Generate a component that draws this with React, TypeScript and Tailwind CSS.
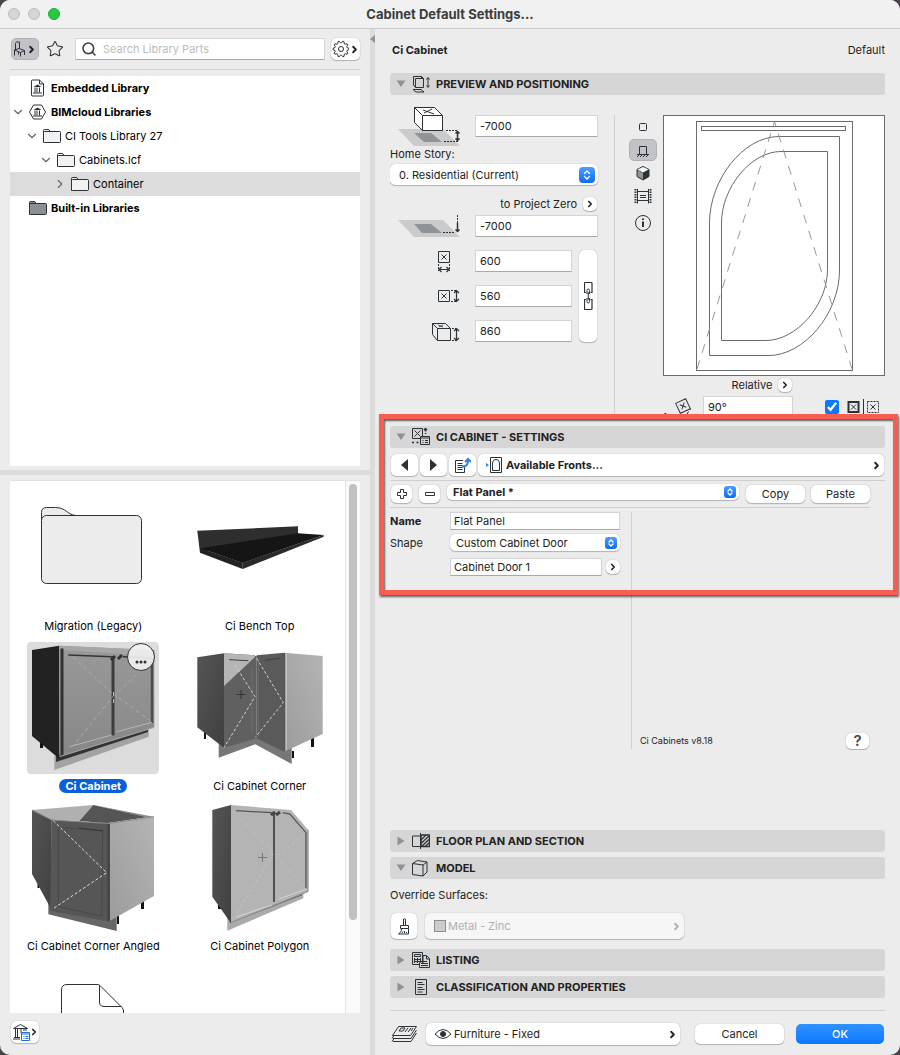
import type { ReactNode } from "react";
import { ChevronDown, ChevronRight, Search, Star } from "lucide-react";

const ink = "#2b3238";

const gearPoints = Array.from({ length: 40 }, (_, i) => {
    const angle = ((i - 0.5) / 40) * Math.PI * 2;
    const radius = i % 4 < 2 ? 8 : 6.2;
    return `${(9 + Math.cos(angle) * radius).toFixed(2)},${(9 + Math.sin(angle) * radius).toFixed(2)}`;
}).join(" ");

type IconProps = { w: number; h: number; children: ReactNode; className?: string };

const Icon = ({ w, h, children, className = "" }: IconProps) => (
    <svg
        width={w}
        height={h}
        viewBox={`0 0 ${w} ${h}`}
        fill="none"
        stroke={ink}
        strokeWidth="1"
        className={`shrink-0 ${className}`}
        aria-hidden="true"
    >
        {children}
    </svg>
);

/* Small tree icons */
const FolderIcon = ({ dark = false }: { dark?: boolean }) => (
    <Icon w={18} h={16}>
        <path d="M.5 14.5V2.5q0-1 1-1H5q1 0 2 1.5l.5.5h9q1 0 1 1v9q0 1-1 1H1.5q-1 0-1-1z" fill={dark ? "#8c9094" : "#f2f2f2"} />
        <path d="M.5 4.5q0-1 1-1h6" />
    </Icon>
);

const Temple = () => (
    <>
        <path d="M-4-2.5 0-5l4 2.5z" fill={ink} stroke="none" />
        <path d="M-2.5-2v5M-.5-2v5M2-2v5M-4.5 3.5h9" />
    </>
);

const EmbeddedIcon = () => (
    <Icon w={18} h={18}>
        <path d="M2.500 2q0-1 1-1h7l4 4v11q0 1-1 1h-10q-1 0-1-1zM10.500 1v4h4" fill="#fff" />
        <g transform="translate(8.500 10.500)"><Temple /></g>
    </Icon>
);

const CloudIcon = () => (
    <Icon w={18} h={18}>
        <path d="M4.500 2h8l4 7-4 7h-8l-4-7z" fill="#fff" />
        <g transform="translate(8.500 9.500)"><Temple /></g>
    </Icon>
);

/* Section bar icons */
const PreviewIcon = () => (
    <Icon w={18} h={18}>
        <path d="M3.500 3.500h8v9h-8zM1.500 1.500h8l2 2M1.500 1.500v8.500l2 2.500M9.500 1.500v2M1 14.500h8l3 2.500H4z" />
        <path d="M16 3v9M14.500 4.500 16 2.500l1.500 2M14.500 10.500l1.500 2 1.500-2" />
    </Icon>
);

const SettingsIcon = () => (
    <Icon w={18} h={18}>
        <path d="M.5.5h10v10H.5zM2.500 2.500l6 6M8.500 2.500l-6 6" />
        <path d="M13.500.5v3M15 2l-1.500-1.500L12 2M13.500 5v1M0 14.500h2M4.500 14.500h2" strokeWidth="1.500" />
        <path d="M8.500 8.500h9v8h-9zM8.500 10h9" fill="#d6d6d6" />
        <path d="M10.500 12.500h1M13 12.500h3M10.500 14.500h1M13 14.500h3" />
    </Icon>
);

const FloorIcon = () => (
    <Icon w={18} h={18}>
        <path d="M8.500 4H.5v10.500h8M8.500 1v16" />
        <path d="M9 3h8.500v11.500H9z" strokeWidth="1.500" />
        <path d="m9 8 5-5M9 11.500 17 4M10 14l7-6.500M13.500 14l3.500-3" strokeWidth="1.300" />
    </Icon>
);

const ModelIcon = () => (
    <Icon w={18} h={18}>
        <path d="M.5 4.500 5.500 1.500l9.500 1.500v10l-4 4L.5 15.500zM.5 4.500l10.500 1.500v11M11 6l4-3" />
    </Icon>
);

const ListingIcon = () => (
    <Icon w={18} h={18}>
        <path d="M.5 1.500h10v12H.5zM2.500 3.500h6v2h-6zM2 8.500h7M2 10.500h7M2.500 7v5M5.500 7v5M8.500 7v5" />
        <path d="M7.500 11.500v5h10v-9l-3-3h-3.500v8" fill="#d6d6d6" />
        <path d="M14.500 5v3h3M9 10.500h6M9 12.500h7M9 14.500h7" />
    </Icon>
);

const ClassIcon = () => (
    <Icon w={18} h={18}>
        <path d="M3.500 1.500h11v15h-11zM5.500 4.500h5M5.500 6.500h7M5.500 9.500h5M5.500 11.500h7M5.500 14h5" />
    </Icon>
);

const BoxedCross = ({ x, y }: { x: number; y: number }) => (
    <path d={`M${x} ${y}h11v11h-11zM${x + 3} ${y + 3}l5 5M${x + 8} ${y + 3}l-5 5`} />
);

const PopUpArrows = ({ small = false }: { small?: boolean }) => (
    <span
        className={`pointer-events-none absolute top-1/2 flex -translate-y-1/2 items-center justify-center bg-linear-to-b from-[#4a9dff] to-[#0a6cf5] ${small ? "right-[3px] size-3 rounded-[3px]" : "right-[3px] size-4 rounded"}`}
    >
        <svg width="8" height="10" viewBox="0 0 8 10" fill="none" stroke="#fff" strokeWidth="1.300" strokeLinecap="round">
            {small ? <path d="m2 4 2-2 2 2M2 6l2 2 2-2" /> : <path d="M1.500 3.500 4 1l2.500 2.500M1.500 6.500 4 9l2.500-2.500" />}
        </svg>
    </span>
);

const card = "rounded-[5px] bg-white shadow-[0_0_1px_rgba(0,0,0,0.35),0_1px_1px_rgba(0,0,0,0.22)]";
const field = "min-w-0 border border-[#d4d4d4] border-b-[#a9a9a9] bg-white outline-none";

const Arrow = ({ className = "size-[11px]" }: { className?: string }) => (
    <ChevronRight className={`shrink-0 ${className}`} strokeWidth={4} />
);

const Bar = ({ title, icon, open = false }: { title: string; icon: ReactNode; open?: boolean }) => (
    <button className="flex h-[22px] w-full shrink-0 items-center gap-1.5 rounded-[3px] bg-[#d6d6d6] pl-1.5 text-left text-[11px] font-bold" aria-expanded={open}>
        <svg width="10" height="10" viewBox="0 0 10 10" fill="#8e9296" aria-hidden="true">
            {open ? <path d="M.5 1.500h9L5 8z" /> : <path d="M1.500.5v9L8.500 5z" />}
        </svg>
        {icon}
        {title}
    </button>
);

const tree = [
    { label: "Embedded Library", depth: 0, icon: <EmbeddedIcon />, bold: true, arrow: "" },
    { label: "BIMcloud Libraries", depth: 0, icon: <CloudIcon />, bold: true, arrow: "down" },
    { label: "CI Tools Library 27", depth: 1, icon: <FolderIcon />, bold: false, arrow: "down" },
    { label: "Cabinets.lcf", depth: 2, icon: <FolderIcon />, bold: false, arrow: "down" },
    { label: "Container", depth: 3, icon: <FolderIcon />, bold: false, arrow: "right" },
    { label: "Built-in Libraries", depth: 0, icon: <FolderIcon dark />, bold: true, arrow: "" },
];

/* Library part thumbnails */
const Thumb = ({ children }: { children: ReactNode }) => (
    <svg width="132" height="132" viewBox="0 0 132 132" fill="none" aria-hidden="true">
        <defs>
            <linearGradient id="door" x1="0" y1="0" x2="0" y2="1">
                <stop offset="0" stopColor="#999" />
                <stop offset="1" stopColor="#878787" />
            </linearGradient>
            <linearGradient id="lightSide" x1="1" y1="0" x2="0" y2="1">
                <stop offset="0" stopColor="#b4b4b4" />
                <stop offset="1" stopColor="#9c9c9c" />
            </linearGradient>
            <linearGradient id="darkSide" x1="0" y1="0" x2="1" y2="1">
                <stop offset="0" stopColor="#555" />
                <stop offset="1" stopColor="#404040" />
            </linearGradient>
        </defs>
        {children}
    </svg>
);

const LegacyThumb = () => (
    <Thumb>
        <g fill="#ececec" stroke={ink}>
            <path d="M14.500 38V30.500q0-5 5-5h9c11 0 12 8 21 8" />
            <rect x="14.500" y="33.500" width="100" height="68" rx="5" />
        </g>
    </Thumb>
);

const BenchThumb = () => (
    <Thumb>
        <path d="M3.300 48.700 104 44.300v8L6 71z" fill="#2e2e2e" />
        <path d="M6 66.300 104 51.300l25.700 1.700-81 28z" fill="#151515" />
        <path d="M6 66.300v4.400L48.700 87v-6.300z" fill="#222" />
        <path d="M48.700 80.700V87l81-32.300V53z" fill="#2a2a2a" />
    </Thumb>
);

const CabinetThumb = () => (
    <Thumb>
        <path d="M13 97h3v9h-3z" fill="#111" />
        <path d="m27.300 114 94.400-30v10.700L27.300 128z" fill="#a3a3a3" />
        <path d="m29 113 92-27v4L29 120z" fill="#333" />
        <path d="m5 8 27.300-4.300v113L5 94z" fill="#222" />
        <path d="m32.300 3.700 95 4.300v77.300l-95 29.400z" fill="url(#door)" />
        <path d="m32.300 3.700 95 4.300v6l-95-6z" fill="#a6a6a6" />
        <path d="M33.500 6.500h3v107l-3 1z" fill="#333" />
        <path d="m41.300 13 43.400 1.700M96 14.700l29 1.600" stroke="#333" strokeWidth="1.500" />
        <path d="M86 14v79.500" stroke="#3c3c3c" strokeWidth="3" />
        <path d="M125 16v65" stroke="#4c4c4c" strokeWidth="2.500" />
        <path d="M42.300 104.700 84.700 93m5-3.300L125 80.300" stroke="#b5b5b5" />
        <path d="m33 114.500 94-29" stroke="#a8a8a8" />
        <path d="M46 15l41 38-40 50M125 18 88 53l37 27" stroke="#b2b2b2" strokeDasharray="4 3" strokeWidth=".8" />
        <path d="m84 18 4-4m3 3 4-4" stroke="#333" strokeWidth="3" />
        <path d="M86.500 50v4m0 3v4" stroke="#bbb" />
    </Thumb>
);

const CornerThumb = () => (
    <Thumb>
        <path d="M10 89h2v8h-2zM117 95h3v10h-3zM98 109h2v7h-2z" fill="#111" />
        <path d="M24.700 100v15.700l36.600-13.400 36.400 19.700v-16L61 92z" fill="#777" />
        <path d="m3.300 15.300 26.700-4v94.400L3.300 85.300z" fill="url(#darkSide)" />
        <path d="m30 11.300 32.700 2v83L30 105.700z" fill="#606060" />
        <path d="m30 11.300 31 2v1.700L30 44z" fill="#b5b5b5" />
        <path d="M62.700 13.300 90 10.700v99L62.700 96.300z" fill="#5a5a5a" />
        <path d="m90 10.700 38.700 3.300v78L90 109.700z" fill="url(#lightSide)" />
        <path d="M90.500 11v98.500" stroke="#555" />
        <path d="M92.500 12v96" stroke="#ccc" strokeWidth=".7" />
        <path d="m35.300 17.700 19 1m16.700-.4 15-2" stroke="#3f3f3f" />
        <path d="M58 24v68M64.500 18v76" stroke="#727272" strokeWidth=".7" />
        <path d="m41 23 20 31.700-31 51M62.700 16.300l26.600 44.400-28 34.600" stroke="#d0d0d0" strokeDasharray="3 2" />
        <path d="M47 48v9M42.500 52.500h9" stroke="#333" />
    </Thumb>
);

const AngledThumb = () => (
    <Thumb>
        <path d="M10.500 80h2v6h-2zM114 99h3v8h-3zM90 114h2v8h-2z" fill="#111" />
        <path d="M21.300 100v12.300L89.700 129v-16z" fill="#666" />
        <path d="m5 8 61.300-5-14 16-27.600-1z" fill="#b0b0b0" />
        <path d="m66.300 3 55 12-41.600 6.300L52.300 19z" fill="#555" />
        <path d="m66.300 3 60 11.700-5 1z" fill="#8b8b8b" />
        <path d="m5 8 19.700 10v90L5 72z" fill="url(#darkSide)" />
        <path d="m24.700 18 58.300 3.300v98.400l-60-11z" fill="#565656" />
        <path d="m31.300 25.300 44.400 3.400-1 85.300-43.400-9.300z" stroke="#494949" />
        <path d="m52 26 24 3" stroke="#333" />
        <path d="m83 21.300 44-6.600V94l-44 24.700z" fill="url(#lightSide)" />
        <path d="M81.500 22v97" stroke="#414141" strokeWidth="2" />
        <path d="m5 8 20 10 57 3.500 45-6.800" stroke="#888" />
        <path d="m26.300 18.700 53.400 52-54 36.300" stroke="#ddd" strokeDasharray="3 2" />
    </Thumb>
);

const PolygonThumb = () => (
    <Thumb>
        <path d="M24 101h3v6h-3z" fill="#111" />
        <path d="m33.300 114 76-24v6.300l-76 32.400z" fill="#aaa" />
        <path d="m36 120 72-28" stroke="#444" strokeWidth="2" />
        <path d="M18.300 8 37 3v118.300L18.300 94.700z" fill="url(#darkSide)" />
        <path d="m37 3 60 5 17.300 20v61.700L37 121z" fill="#b4b4b4" />
        <path d="m42 8.700 35.700 2m11 0L96 12l16 18.700v55.600" stroke="#555" strokeWidth="1.300" />
        <path d="M114 28v61.500L37 120.500" stroke="#8a8a8a" />
        <path d="M80 12v88" stroke="#505050" strokeWidth="2" />
        <path d="m42 115 36-12m7-6 27-10" stroke="#d4d4d4" />
        <path d="m42.700 13 37 38L42 113M110 33 82 54.700l28 30" stroke="#c8c8c8" strokeDasharray="3 3" strokeWidth=".7" />
        <path d="m77 13 4-3m1 3 4-3" stroke="#444" strokeWidth="3" />
        <path d="M68.500 51v9M64 55.500h9" stroke="#777" />
    </Thumb>
);

const FileThumb = () => (
    <Thumb>
        <path d="M34.500 132V28q0-5.500 5.500-5.500h30q2 0 3 1l22 22q1.500 1.500 1.500 3.500v83M72.500 23v17q0 4.500 4.500 4.500h17.500" stroke={ink} />
    </Thumb>
);

const parts = [
    { label: "Migration (Legacy)", thumb: <LegacyThumb /> },
    { label: "Ci Bench Top", thumb: <BenchThumb /> },
    { label: "Ci Cabinet", thumb: <CabinetThumb />, selected: true },
    { label: "Ci Cabinet Corner", thumb: <CornerThumb /> },
    { label: "Ci Cabinet Corner Angled", thumb: <AngledThumb /> },
    { label: "Ci Cabinet Polygon", thumb: <PolygonThumb /> },
    { label: "", thumb: <FileThumb /> },
];

const LibraryPanel = () => (
    <aside className="flex w-[370px] shrink-0 flex-col px-2.5 pb-3">
        <div className="flex h-10 shrink-0 items-center pl-px">
            <button aria-label="Library view" className="flex h-[22px] w-7 items-center justify-center rounded-[5px] border border-[#b0b0b5] bg-[#c2c2c8]">
                <Icon w={13} h={16}>
                    <path d="M2.500 9V2.500q0-1 1-1.500L6.500 1v6M1.500 9l4.500-1.500 5.500 2-4 2zM1.500 9v5.500M7.500 11.500V15.500M11.500 9.500V14M5.500 11v2.500" />
                </Icon>
                <Arrow />
            </button>
            <button aria-label="Favorites" className="ml-[7px]">
                <Star className="size-[18px] text-[#2b3238]" strokeWidth={1.4} />
            </button>
            <label className="relative ml-[11px] flex-1">
                <Search className="absolute top-[3px] left-1.5 size-4 text-[#444]" strokeWidth={2.4} />
                <input
                    aria-label="Search Library Parts"
                    placeholder="Search Library Parts"
                    className={`${field} block h-[22px] w-full pl-[27px] placeholder:text-[#bcbcbc]`}
                />
            </label>
            <button aria-label="Options" className={`${card} ml-1.5 flex h-[22px] w-[29px] items-center justify-center`}>
                <Icon w={17} h={18}>
                    <polygon points={gearPoints} />
                    <circle cx="9" cy="9" r="2.500" />
                </Icon>
                <Arrow />
            </button>
        </div>
        <hr className="mb-1.5 border-[#cfcfcf]" />

        <ul className="h-[390px] shrink-0 bg-white text-black">
            {tree.map((row) => (
                <li key={row.label} className={row.label === "Container" ? "bg-[#dcdcdc]" : ""}>
                    <div className={`flex h-6 items-center ${["pl-[3px]", "pl-[17px]", "pl-[31px]", "pl-[45px]"][row.depth]}`}>
                        <span className="mr-1.5 w-2.5 text-[#666]">
                            {row.arrow === "down" && <ChevronDown className="-ml-0.5 size-3.5" strokeWidth={2} />}
                            {row.arrow === "right" && <ChevronRight className="-ml-0.5 size-3.5" strokeWidth={2} />}
                        </span>
                        {row.icon}
                        <span className={`ml-1 ${row.bold ? "font-bold" : ""}`}>{row.label}</span>
                    </div>
                </li>
            ))}
        </ul>
        <div className="-mx-2.5 mt-1 mb-[5px] h-[5px] shrink-0 bg-[#dcdcdc]"></div>

        <div className="flex min-h-0 flex-1 border-t border-[#e2e2e2] bg-white">
            <div className="grid flex-1 auto-rows-[160px] grid-cols-2 overflow-hidden pt-px pr-0.5 text-black">
                {parts.map((part, index) => (
                    <div key={index} className="flex flex-col items-center">
                        <div className={`relative rounded ${part.selected ? "bg-[#dcdcdc]" : ""}`}>
                            {part.thumb}
                            {part.selected && (
                                <button aria-label="More" className="absolute top-px right-1 flex size-7 items-end justify-center rounded-full border border-[#2b3238] bg-[#f2f2f2]/90 pb-1.5">
                                    <svg width="12" height="4" fill={ink}>
                                        <circle cx="2" cy="2" r="1.500" />
                                        <circle cx="6" cy="2" r="1.500" />
                                        <circle cx="10" cy="2" r="1.500" />
                                    </svg>
                                </button>
                            )}
                        </div>
                        <p className={`mt-[5px] rounded-full px-1.5 leading-[14px] ${part.selected ? "bg-[#0a60dc] font-bold text-white" : ""}`}>{part.label}</p>
                    </div>
                ))}
            </div>
            <div className="w-[15px] border-l border-[#e4e4e4] bg-[#fafafa] pt-[3px]">
                <div className="mx-auto h-[436px] w-2 rounded-full bg-[#c1c1c1]"></div>
            </div>
        </div>
        <button aria-label="Library manager" className={`${card} mt-2 ml-px flex h-[22px] w-7 shrink-0 items-center justify-center`}>
            <Icon w={19} h={19}>
                <path d="M1.500 5.500 8.500 1.500l7 4zM3.500 6v8M5.500 6v8M9 6v4M12 6v2M14 6v2M2 14.500h6M1 16h7" />
                <path d="M9.500 9.500h8v8h-8z" fill="#fff" stroke="#1d6fe0" />
                <path d="M9.500 11h8M11.500 13.500h1M13.500 13.500h3M11.500 15.500h1M13.500 15.500h3" stroke="#1d6fe0" />
            </Icon>
            <Arrow className="-ml-0.5 size-[10px]" />
        </button>
    </aside>
);

const sizes = [
    {
        label: "Width",
        value: "600",
        icon: (
            <Icon w={29} h={24}>
                <BoxedCross x={7.5} y={2.5} />
                <path d="M7.500 15v7M18.500 15v7" strokeDasharray="2 1" />
                <path d="M8 20.500h10M10.500 18 8 20.500l2.500 2.500M15.500 18l2.500 2.500-2.500 2.500" strokeWidth="1.200" />
            </Icon>
        ),
    },
    {
        label: "Depth",
        value: "560",
        icon: (
            <Icon w={29} h={24}>
                <BoxedCross x={7.5} y={6.5} />
                <path d="M20 6.500h5M20 17.500h5" strokeDasharray="2 1" />
                <path d="M25.500 7v10M23 9l2.500-2.500L28 9M23 15l2.500 2.500L28 15" strokeWidth="1.200" />
            </Icon>
        ),
    },
    {
        label: "Height",
        value: "860",
        icon: (
            <Icon w={29} h={24}>
                <path d="M1.500 4.500h13l5 5v12h-13l-5-6zM1.500 4.500l5 5h13M6.500 9.500v12" />
                <path d="m7 6 5 2M8 8l4-2" strokeWidth=".8" />
                <path d="M21 9.500h4M21 21.500h4" strokeDasharray="2 1" />
                <path d="M25.500 10v11M23 12l2.500-2.500L28 12M23 19l2.500 2.500L28 19" strokeWidth="1.200" />
            </Icon>
        ),
    },
];

const PositionForm = () => (
    <div className="w-52 shrink-0 pt-2.5">
        <div className="flex h-[42px] items-center justify-between pl-2">
            <Icon w={64} h={42}>
                <path d="M0 24h45l17 17H16z" fill="#cbcbcb" stroke="none" />
                <path d="M16 28h17l11 9H26z" fill="#8f9498" stroke="none" />
                <path d="M16.500 2.500h20l8 8v15h-20l-8-8z" fill="#fff" />
                <path d="M16.500 2.500l8 8h20M24.500 10.500v15M25 5l11 4M26 8l8-4" />
                <path d="M48 25.500h12M46 36.500h14" strokeDasharray="2 1" />
                <path d="M59.500 27v8M57.500 28.500l2-2 2 2M57.500 33.500l2 2 2-2" strokeWidth="1.500" />
            </Icon>
            <input aria-label="Elevation to home story" defaultValue="-7000" className={`${field} h-[22px] w-[123px] px-1`} />
        </div>
        <label htmlFor="story" className="block leading-[14px]">Home Story:</label>
        <div className="relative mt-[3px]">
            <select id="story" className={`${card} h-[21px] w-full appearance-none pl-[9px] outline-none`}>
                <option>0. Residential (Current)</option>
            </select>
            <PopUpArrows />
        </div>
        <div className="mt-3 flex h-3.5 items-center justify-end gap-1.5 pr-px">
            to Project Zero
            <button aria-label="Reference level" className={`${card} flex size-3.5 items-center justify-center`}><Arrow className="size-2.5" /></button>
        </div>
        <div className="mt-1 flex items-center justify-between pl-2">
            <Icon w={64} h={22}>
                <path d="M0 5h45l17 17H16z" fill="#cbcbcb" stroke="none" />
                <path d="M16 9h17l11 9H24z" fill="#8f9498" stroke="none" />
                <path d="M45 17.500h12M59.500 0v8" strokeDasharray="2 1" />
                <path d="M59.500 8v9M57.500 14.500l2 2 2-2" strokeWidth="1.500" />
            </Icon>
            <input aria-label="Elevation to project zero" defaultValue="-7000" className={`${field} h-[22px] w-[123px] px-1`} />
        </div>
        <div className="mt-[13px] flex justify-between">
            <div className="flex flex-col gap-[13px]">
                {sizes.map((size) => (
                    <label key={size.label} className="flex h-[22px] items-center gap-[15px] pl-[41px]">
                        {size.icon}
                        <input aria-label={size.label} defaultValue={size.value} className={`${field} h-[22px] w-[97px] px-1`} />
                    </label>
                ))}
            </div>
            <button aria-label="Keep proportions" className={`${card} mr-px flex w-[18px] items-center justify-center`}>
                <Icon w={9} h={30}>
                    <path d="M2 11.500H.5V2q0-.5.5-.5h6.500q.5 0 .5.5v9.500H6.500M2 18.500H.5V28q0 .5.5.5h6.500q.5 0 .5-.5v-9.500H6.500" strokeWidth="1.200" />
                    <path d="M3 13V9.500Q3 8 4.300 8T5.600 9.500V13M3 17v3.500Q3 22 4.300 22t1.300-1.500V17M4.300 11v8" />
                </Icon>
            </button>
        </div>
    </div>
);

const views = [
    { label: "2D symbol", icon: <Icon w={18} h={18}><rect x="5.500" y="5.500" width="7" height="7" rx="1" /></Icon> },
    { label: "Side view", selected: true, icon: <Icon w={18} h={18}><path d="M5.500 13V5.500h7V13M3 13.500h12M3 16l2-2M6 16l2-2M9 16l2-2M12 16l2-2" /></Icon> },
    {
        label: "3D view",
        icon: (
            <Icon w={18} h={18}>
                <path d="m9 2.500 6 3v7l-6 3.500-6-3.500v-7z" fill={ink} />
                <path d="m9 3 5.500 2.500L9 8.500 3.500 5.500z" fill="#fff" stroke="none" />
                <path d="m3.500 6 5.500 3v6.500l-5.500-3.200z" fill="#8f9498" stroke="none" />
            </Icon>
        ),
    },
    {
        label: "Preview picture",
        icon: (
            <Icon w={18} h={18}>
                <path d="M3.500 4.500h11v9h-11zM6 8.500h6M6 10.500h6" />
                <path d="M1.500 2v14.500M16.500 2v14.500" strokeWidth="2" strokeDasharray="1.500 1" />
                <path d="M3.500 2v14.500M14.500 2v14.500" />
            </Icon>
        ),
    },
    {
        label: "Info",
        icon: (
            <Icon w={18} h={18}>
                <circle cx="9" cy="9" r="7.500" />
                <path d="M9 7.500V13M9 4.500v1.500" strokeWidth="2" />
            </Icon>
        ),
    },
];

const PreviewPane = () => (
    <div className="mt-5 flex min-w-0 flex-1 border-l border-[#cfcfcf] pl-3.5">
        <div className="mt-px flex h-fit flex-col gap-px">
            {views.map((view) => (
                <button
                    key={view.label}
                    aria-label={view.label}
                    className={`flex h-[22px] w-7 items-center justify-center rounded-[5px] last:mt-1 ${view.selected ? "border border-[#b0b0b5] bg-[#c2c2c8]" : ""}`}
                >
                    {view.icon}
                </button>
            ))}
        </div>
        <div className="ml-1.5 flex min-w-0 flex-1 flex-col">
            <svg viewBox="0 0 222 261" className="w-full shrink-0 bg-white" fill="none" stroke="#6b6b6b">
                <rect x=".5" y=".5" width="221" height="260" />
                <rect x="33.500" y="6.500" width="156" height="249" />
                <rect x="38.500" y="11.500" width="144" height="4" />
                <path d="M46.500 108v132.500H106C140 240.500 176.500 200 176.500 155V21.500H116C80 21.500 46.500 65 46.500 108z" />
                <path d="M58.500 108v117.500H103c30 0 61.500-35 61.500-71V36.500H118c-30 0-59.500 36-59.500 71.500z" />
                <path d="M34 254 111.500 6.500 189 254" stroke="#999" strokeDasharray="9 8" />
            </svg>
            <div className="flex h-[18px] shrink-0 items-center justify-center gap-1.5 pr-6">
                Relative
                <button aria-label="Angle mode" className={`${card} flex size-3.5 items-center justify-center`}><Arrow className="size-2.5" /></button>
            </div>
            <div className="mt-0.5 flex items-center">
                <Icon w={28} h={22} className="mr-3">
                    <g transform="rotate(-25 20 10)"><BoxedCross x={14.5} y={4.5} /></g>
                    <path d="M24 18l4-6M7 19.500l19-1" strokeDasharray="3 2" />
                    <path d="m2 17 3 2.500H2z" fill={ink} />
                </Icon>
                <input aria-label="Rotation angle" defaultValue="90°" className={`${field} h-[22px] w-[90px] px-1`} />
                <input aria-label="Mirror" type="checkbox" defaultChecked className="ml-auto size-3.5 accent-[#0a78ff]" />
                <Icon w={36} h={18} className="ml-1.5 mr-1">
                    <path d="M3.500 4h10v10h-10z" strokeWidth="2" />
                    <path d="m6 6.500 5 5M11 6.500l-5 5M18.500 1v16" />
                    <path d="M22.500 3.500h11v11h-11z" strokeDasharray="2 1" />
                    <path d="m25.500 6.500 5 5M30.500 6.500l-5 5" />
                </Icon>
            </div>
        </div>
    </div>
);

const CabinetSettings = () => (
    <section className="relative flex-1">
        <Bar title="CI CABINET - SETTINGS" icon={<SettingsIcon />} open />
        <div className="mt-1.5 flex h-[22px] gap-0.5 px-px">
            <button aria-label="Previous page" className={`${card} flex w-[27px] items-center justify-center`}>
                <svg width="7" height="12" fill={ink}><path d="M7 0v12L0 6z" /></svg>
            </button>
            <button aria-label="Next page" className={`${card} flex w-[27px] items-center justify-center`}>
                <svg width="7" height="12" fill={ink}><path d="M0 0v12l7-6z" /></svg>
            </button>
            <button aria-label="Page list" className={`${card} flex w-[27px] items-center justify-center`}>
                <Icon w={17} h={17}>
                    <path d="M9 3.500H1.500v12h9V10M3.500 6.500h5M3.500 8.500h5M3.500 10.500h5M3.500 12.500h5" />
                    <path d="M8 9.500c4 0 6-1 6-7M11 5l3-3 3 3" stroke="#2f80f5" strokeWidth="2" />
                </Icon>
            </button>
            <button className={`${card} flex flex-1 items-center pr-0.5 pl-2 font-bold`}>
                <Icon w={16} h={17} className="mr-1">
                    <path d="M0 6v4l3-2z" fill="#2f80f5" stroke="none" />
                    <path d="M4.500.5h11v15h-11zM6.500 13.500V6q0-3.500 3.500-3.500T13.500 6v7.500z" />
                </Icon>
                Available Fronts...
                <Arrow className="ml-auto size-[11px]" />
            </button>
        </div>
        <hr className="mt-1 border-[#cfcfcf]" />
        <div className="mr-[15px] flex h-[27px] items-center border-b border-[#cfcfcf] pb-px">
            <button aria-label="Add" className={`${card} ml-px flex h-[18px] w-[21px] items-center justify-center`}>
                <Icon w={10} h={10}><path d="M3.500.5h3v3h3v3h-3v3h-3v-3h-3v-3h3z" /></Icon>
            </button>
            <button aria-label="Remove" className={`${card} ml-[7px] flex h-[18px] w-[21px] items-center justify-center`}>
                <Icon w={10} h={10}><path d="M.5 3.500h9v3h-9z" /></Icon>
            </button>
            <div className="relative mr-[7px] mb-1 ml-[7px] flex-1">
                <select aria-label="Front" className={`${card} block h-4 w-full appearance-none pl-1.5 font-bold outline-none`}>
                    <option>Flat Panel *</option>
                </select>
                <PopUpArrows small />
            </div>
            <button className={`${card} h-[18px] w-[59px]`}>Copy</button>
            <button className={`${card} ml-1.5 h-[18px] w-[59px]`}>Paste</button>
        </div>

        <div className="mt-1 flex h-[237px]">
            <div className="w-[242px] shrink-0 border-r border-[#cfcfcf] pr-[11px]">
                <div className="flex items-center">
                    <label htmlFor="front-name" className="w-[60px] font-bold">Name</label>
                    <input id="front-name" defaultValue="Flat Panel" className={`${field} h-[18px] flex-1 px-[3px]`} />
                </div>
                <div className="mt-1 flex items-center">
                    <label htmlFor="front-shape" className="w-[60px]">Shape</label>
                    <div className="relative flex-1">
                        <select id="front-shape" className={`${card} block h-[17px] w-full appearance-none pl-1.5 outline-none`}>
                            <option>Custom Cabinet Door</option>
                        </select>
                        <PopUpArrows small />
                    </div>
                </div>
                <div className="mt-[7px] flex items-center justify-end pl-[60px]">
                    <input aria-label="Door" defaultValue="Cabinet Door 1" className={`${field} h-[18px] flex-1 px-[3px]`} />
                    <button aria-label="Choose door" className={`${card} ml-1 flex size-3.5 items-center justify-center`}><Arrow className="size-2.5" /></button>
                </div>
            </div>
            <div className="flex flex-1 items-end justify-between pr-4 pl-2">
                <p className="text-[9px] leading-4">Ci Cabinets v8.18</p>
                <button aria-label="Help" className={`${card} h-4 w-[23px] text-[15px] leading-4 font-semibold text-[#444]`}>?</button>
            </div>
        </div>

        {/* Highlight frame */}
        <div className="pointer-events-none absolute -top-3 -right-[13px] -left-[11px] h-[181px] border-[5px] border-[#f95c50] shadow-[1px_2px_2px_rgba(0,0,0,0.6),inset_1px_2px_2px_rgba(0,0,0,0.6)]"></div>
    </section>
);

const SettingsPanel = () => (
    <main className="flex min-w-0 flex-1 flex-col px-[15px] pb-2.5">
        <div className="flex h-11 shrink-0 items-center justify-between pb-0.5 pl-0.5">
            <h2 className="font-bold">Ci Cabinet</h2>
            <span>Default</span>
        </div>
        <Bar title="PREVIEW AND POSITIONING" icon={<PreviewIcon />} open />
        <div className="mb-2.5 flex h-[321px] shrink-0 gap-4 overflow-hidden">
            <PositionForm />
            <PreviewPane />
        </div>
        <CabinetSettings />
        <div className="flex flex-col gap-[5px]">
            <Bar title="FLOOR PLAN AND SECTION" icon={<FloorIcon />} />
            <Bar title="MODEL" icon={<ModelIcon />} open />
        </div>
        <p className="mt-2 leading-4">Override Surfaces:</p>
        <div className="mt-2.5 mb-2.5 flex gap-2">
            <button aria-label="Override" className={`${card} ml-px flex h-[26px] w-[26px] items-center justify-center`}>
                <Icon w={13} h={17}>
                    <path d="M5.500 7V2q0-1.500 1-1.500t1 1.500v5M2.500 7.500h8v3h-8zM3.500 10.500c0 3-1 4-3 5.500h10V10.500M4 15l1-1.500M6.500 15v-2M8.500 15v-1" />
                </Icon>
            </button>
            <button disabled className={`${card} flex h-[26px] w-[259px] items-center bg-white/50 pr-0.5 pl-[9px] text-[#b0b0b0]`}>
                <span className="mr-0.5 size-3 border border-[#8c8c8c] bg-[#cdcdcd]"></span>
                Metal - Zinc
                <Arrow className="ml-auto size-[11px]" />
            </button>
        </div>
        <div className="flex flex-col gap-[5px]">
            <Bar title="LISTING" icon={<ListingIcon />} />
            <Bar title="CLASSIFICATION AND PROPERTIES" icon={<ClassIcon />} />
        </div>
        <hr className="mt-3 mb-3 border-[#cfcfcf]" />
        <footer className="flex shrink-0 items-center pr-px">
            <Icon w={27} h={18} className="mr-2 ml-px">
                <path d="M7.500 1.500h18l-6 9H1.500zM8 6l2-3h4l-2 3zM14 7l3-4M17 7l3-4M20 6l2-3" />
                <path d="M2 13.500h18l5.500-8.500M2 16.500h18l5.500-8.500M3 10.500 1 13.500M3 13.500l-2 3" />
            </Icon>
            <button className={`${card} flex h-[22px] w-[254px] items-center pr-0.5 pl-2`}>
                <Icon w={18} h={12} className="mr-0.5">
                    <path d="M1 6q8-9 16 0-8 9-16 0z" />
                    <circle cx="9" cy="6" r="2.500" fill={ink} />
                </Icon>
                Furniture - Fixed
                <Arrow className="ml-auto size-[11px]" />
            </button>
            <button className={`${card} ml-auto h-5 w-[89px]`}>Cancel</button>
            <button className="ml-3 h-5 w-[88px] rounded-[5px] bg-linear-to-b from-[#2f92ff] to-[#0a78ff] font-medium text-white">OK</button>
        </footer>
    </main>
);

const App = () => {
    return (
        <div className="h-screen bg-[#4a424c]">
            <div className="flex h-full flex-col overflow-hidden rounded-[10px] bg-[#ececec] font-[Inter,sans-serif] text-[11px] leading-4 text-[#222]">
                <header className="relative flex h-[29px] shrink-0 items-center justify-center border-b border-[#cdcdcd] bg-[#f1f1f1]">
                    <div className="absolute left-2 flex gap-2">
                        <button aria-label="Close" className="size-3 rounded-full border border-[#bdbdbd] bg-[#d6d6d6]"></button>
                        <button aria-label="Minimize" className="size-3 rounded-full border border-[#bdbdbd] bg-[#d6d6d6]"></button>
                        <button aria-label="Zoom" className="size-3 rounded-full border border-[#1faa35] bg-[#29c840]"></button>
                    </div>
                    <h1 className="text-[13px] font-bold text-[#3c3c3c]">Cabinet Default Settings...</h1>
                </header>
                <div className="flex min-h-0 flex-1">
                    <LibraryPanel />
                    <div className="w-[5px] shrink-0 bg-[#dcdcdc] pt-1.5">
                        <svg width="5" height="8" fill="#8e9296"><path d="M5 0v8L0 4z" /></svg>
                    </div>
                    <SettingsPanel />
                </div>
            </div>
        </div>
    );
};

export default App;
